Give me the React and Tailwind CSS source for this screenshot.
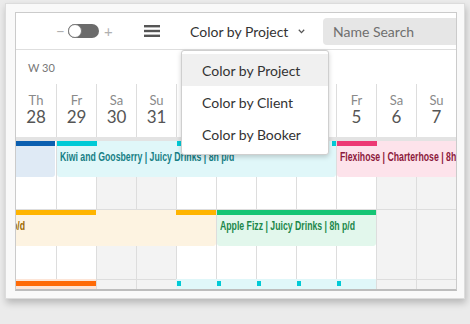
import { useState } from "react";

const days = [
  ["Th", 28], ["Fr", 29], ["Sa", 30], ["Su", 31], ["Mo", 1], ["Tu", 2],
  ["We", 3], ["Th", 4], ["Fr", 5], ["Sa", 6], ["Su", 7],
];
const isWeekend = (i) => [2, 3, 9, 10].includes(i);

// x / w in px from the left edge of the grid, bars as [start, width]
const rows = [
  {
    h: "h-[69px] border-b",
    events: [
      { x: -60, w: 99, bg: "bg-[#dfeaf5]", bar: "bg-[#0b5fb0]", bars: [[0, 40]] },
      {
        x: 41, w: 279, bg: "bg-[#e0f7f9]", bar: "bg-[#00cad6]", bars: [[41, 40]],
        squares: [161, 201, 241, 281, 316],
        text: "Kiwi and Goosberry | Juicy Drinks | 8h p/d", tx: 44, color: "text-[#177f86]",
      },
      {
        x: 321, w: 200, bg: "bg-[#fde3eb]", bar: "bg-[#ec3a74]", bars: [[321, 40]],
        text: "Flexihose | Charterhose | 8h p/d", tx: 324, color: "text-[#8c1a3c]",
      },
    ],
  },
  {
    h: "h-[70px] border-b",
    events: [
      {
        x: -200, w: 400, bg: "bg-[#fdf3e1]", bar: "bg-[#ffb400]", bars: [[0, 80], [160, 40]],
        text: "Cherry Cola | Juicy Drinks | 8h p/d", tRight: 9, color: "text-[#9c6a00]",
      },
      {
        x: 201, w: 159, bg: "bg-[#e2f7ec]", bar: "bg-[#14c574]", bars: [[201, 159]],
        text: "Apple Fizz | Juicy Drinks | 8h p/d", tx: 204, color: "text-[#1b874a]",
      },
    ],
  },
  {
    h: "h-[9px]",
    top: -1,
    events: [
      { x: -40, w: 120, bg: "bg-[#fde5d7]", bar: "bg-[#ff6a06]", bars: [[0, 80]], barTop: 2 },
      { x: 160, w: 200, bg: "bg-[#e0f7f9]", bar: "bg-[#00cad6]", squares: [161, 201, 241, 281, 321], barTop: 2 },
    ],
  },
];

function Event({ e, top }) {
  const barTop = e.barTop ?? 0;
  return (
    <div
      className={`absolute h-[36px] rounded-b-[3px] overflow-hidden ${e.bg}`}
      style={{ left: e.x, width: e.w, top }}
    >
      {(e.bars || []).map(([s, w]) => (
        <div key={s} className={`absolute h-[5px] ${e.bar}`} style={{ left: s - e.x, width: w, top: barTop }} />
      ))}
      {(e.squares || []).map((s) => (
        <div key={s} className={`absolute w-[4px] h-[5px] ${e.bar}`} style={{ left: s - e.x, top: barTop }} />
      ))}
      {e.text && (
        <span
          className={`absolute top-[9px] whitespace-nowrap font-['Liberation_Sans',Arial,sans-serif] font-bold text-[13px] leading-[14px] scale-x-[0.67] ${
            e.tRight != null ? "origin-right" : "origin-left"
          } ${e.color}`}
          style={e.tRight != null ? { right: e.w - (e.tRight - e.x) } : { left: e.tx - e.x }}
        >
          {e.text}
        </span>
      )}
    </div>
  );
}

function Cells() {
  return days.map((d, i) => (
    <div
      key={i}
      className={`w-[40px] h-full shrink-0 border-l border-[#dddddd] first:border-l-0 ${
        isWeekend(i) ? "bg-[#f3f3f3]" : "bg-white"
      }`}
    />
  ));
}

export default function App() {
  const [mode] = useState("Color by Project");

  return (
    <div className="w-[470px] h-[324px] overflow-hidden bg-[#ebebeb] pl-[5px] pt-[3px] font-['Lato',sans-serif]">
      <div className="w-[460px] h-[296px] bg-[#f9f9f9] border border-[#dcdcdc] shadow-[1px_4px_7px_rgba(0,0,0,0.22)] pl-[9px] pt-[8px]">
        <div className="relative w-[442px] h-[279px] overflow-hidden bg-white border border-[#cbcbcb] border-b-2 border-b-[#bdbdbd]">
          {/* toolbar */}
          <div className="h-[37px] border-b border-[#dedede] flex items-center">
            <span className="shrink-0 ml-[40px] w-[8px] text-center text-[15px] leading-none text-[#b0b0b0]">−</span>
            <div className="shrink-0 ml-[4px] w-[31px] h-[14px] rounded-full bg-[#6b6b6b] flex items-center">
              <div className="w-[14px] h-[14px] rounded-full bg-white border border-[#7a7a7a]" />
            </div>
            <span className="shrink-0 ml-[5px] w-[8px] text-center text-[15px] leading-none text-[#b0b0b0]">+</span>
            <svg className="shrink-0 ml-[32px]" width="16" height="14" viewBox="0 0 16 14">
              <rect x="0" y="1" width="16" height="2.4" fill="#555" />
              <rect x="0" y="5.8" width="16" height="2.4" fill="#555" />
              <rect x="0" y="10.6" width="16" height="2.4" fill="#555" />
            </svg>
            <div className="ml-[30px] w-[133px] shrink-0 flex items-center">
              <span className="text-[14px] text-[#333333]">{mode}</span>
              <svg className="ml-[10px] mt-[1px]" width="7" height="5" viewBox="0 0 7 5">
                <polyline points="0.8,0.8 3.5,3.6 6.2,0.8" fill="none" stroke="#555" strokeWidth="1.3" />
              </svg>
            </div>
            <input
              readOnly
              placeholder="Name Search"
              className="shrink-0 w-[150px] h-[27px] rounded-[4px] bg-[#e6e6e6] pl-[10px] text-[14px] outline-none placeholder:text-[#6f6f6f]"
            />
          </div>

          {/* week label */}
          <div className="h-[34px] pl-[12px] pt-[12px] text-[11px] leading-[12px] text-[#777777]">W 30</div>

          {/* day header */}
          <div className="h-[53px] flex">
            {days.map(([n, d], i) => (
              <div
                key={i}
                className="w-[40px] shrink-0 border-l border-[#dddddd] first:border-l-0 flex flex-col items-center pt-[9px]"
              >
                <span className="text-[13px] leading-[14px] text-[#8a8a8a]">{n}</span>
                <span className="text-[17px] leading-[20px] text-[#555555]">{d}</span>
              </div>
            ))}
          </div>
          <div className="h-[4px] bg-[#e3e3e3]" />

          {/* rows */}
          {rows.map((r, ri) => (
            <div key={ri} className={`relative flex border-[#dddddd] ${r.h}`}>
              <Cells />
              {r.events.map((e, ei) => (
                <Event key={ei} e={e} top={r.top ?? 0} />
              ))}
            </div>
          ))}

          {/* colour-by menu */}
          <div className="absolute left-[165px] top-[37px] z-10 w-[148px] h-[105px] bg-white border border-[#cfcfcf] rounded-[3px] shadow-[0_2px_5px_rgba(0,0,0,0.18)] pt-[3px]">
            {["Color by Project", "Color by Client", "Color by Booker"].map((t) => (
              <div
                key={t}
                className={`h-[32px] flex items-center pl-[20px] text-[14px] text-[#333333] ${
                  t === mode ? "bg-[#f0f0f0]" : ""
                }`}
              >
                {t}
              </div>
            ))}
          </div>
        </div>
      </div>
    </div>
  );
}
